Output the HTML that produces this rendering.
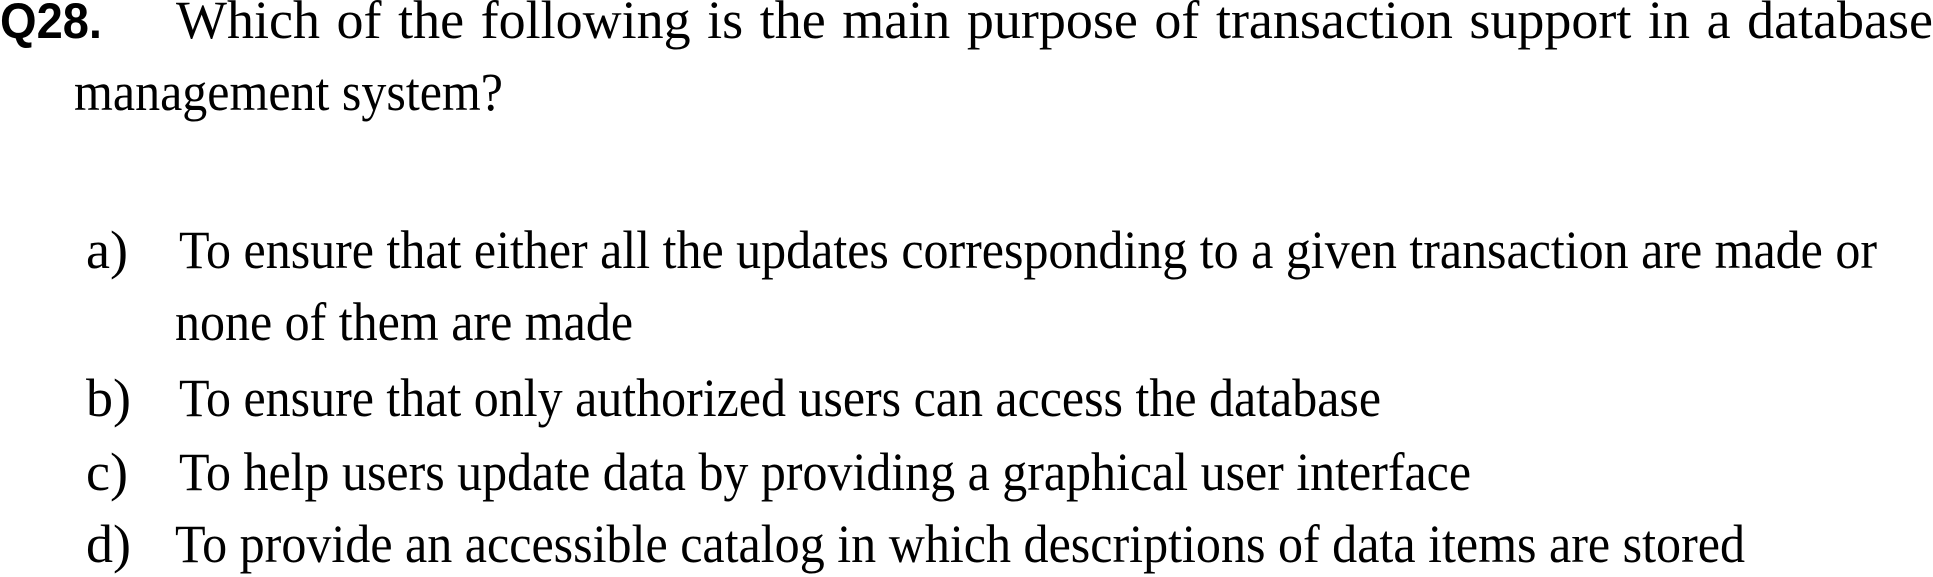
<!DOCTYPE html>
<html><head><meta charset="utf-8"><style>
html,body{margin:0;padding:0;background:#fff;width:1933px;height:577px;overflow:hidden;position:relative}
svg{display:block;position:absolute;left:0;top:0}
text{font-family:"Liberation Serif",serif;font-size:54px;fill:#000}
.b{font-family:"Liberation Sans",sans-serif;font-weight:bold;font-size:50px}
#l1{position:absolute;left:176px;top:-7px;width:1757px;font-family:"Liberation Serif",serif;font-size:54px;line-height:54px;text-align:justify;text-align-last:justify;white-space:nowrap;}
#l1{white-space:normal}
</style></head><body>
<svg width="1933" height="577" xmlns="http://www.w3.org/2000/svg">
<text class="b" x="0" y="38" textLength="102" lengthAdjust="spacingAndGlyphs">Q28.</text>
<text x="74" y="110" textLength="429" lengthAdjust="spacingAndGlyphs">management system?</text>
<text x="86" y="268">a)</text>
<text x="179" y="268" textLength="1698" lengthAdjust="spacingAndGlyphs">To ensure that either all the updates corresponding to a given transaction are made or</text>
<text x="175" y="340" textLength="458" lengthAdjust="spacingAndGlyphs">none of them are made</text>
<text x="86" y="416">b)</text>
<text x="179" y="416" textLength="1202" lengthAdjust="spacingAndGlyphs">To ensure that only authorized users can access the database</text>
<text x="86" y="490">c)</text>
<text x="179" y="490" textLength="1292" lengthAdjust="spacingAndGlyphs">To help users update data by providing a graphical user interface</text>
<text x="86" y="562">d)</text>
<text x="175" y="562" textLength="1570" lengthAdjust="spacingAndGlyphs">To provide an accessible catalog in which descriptions of data items are stored</text>
</svg>
<div id="l1">Which of the following is the main purpose of transaction support in a database</div>
</body></html>
